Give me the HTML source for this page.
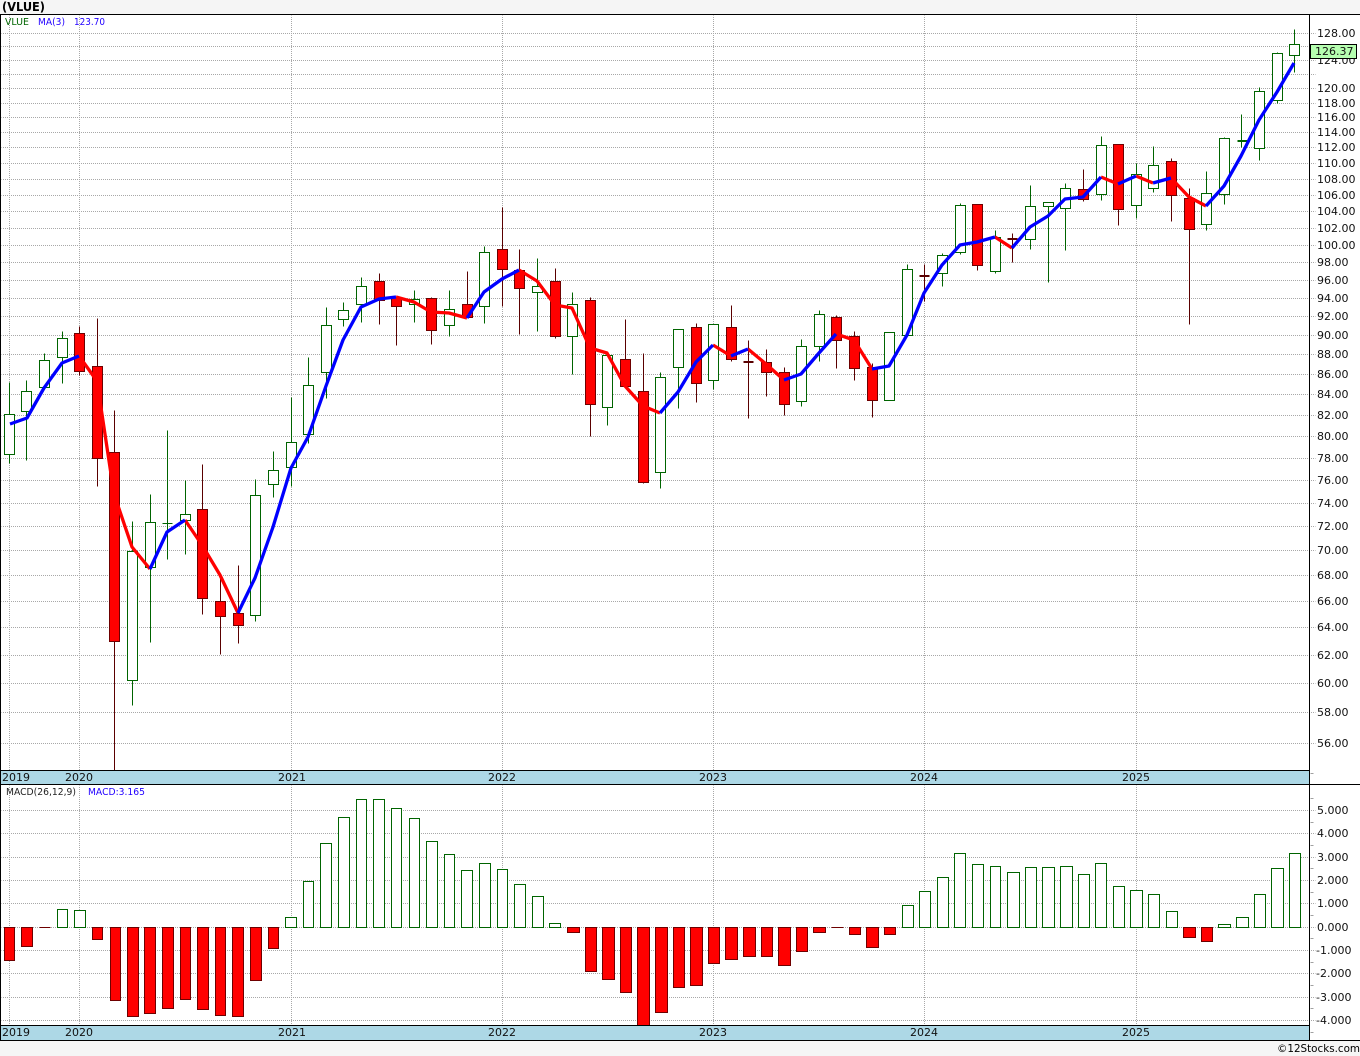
<!DOCTYPE html>
<html><head><meta charset="utf-8"><title>VLUE</title>
<style>
html,body{margin:0;padding:0;background:#f5f5f5;width:1360px;height:1056px;overflow:hidden}
svg{display:block}
text{font-family:"DejaVu Sans","Liberation Sans",sans-serif;font-size:11px;fill:#111}
.g{font-size:10px}
.c{shape-rendering:crispEdges}
.ma{fill:none;stroke-width:3.3;stroke-linejoin:round;stroke-linecap:butt}
.b{stroke:#0000ff}.r{stroke:#ff0000}
</style></head><body>
<svg width="1360" height="1056" viewBox="0 0 1360 1056" xmlns="http://www.w3.org/2000/svg">
<rect x="0" y="14" width="1360" height="1027" fill="#fff"/>
<g class="c" transform="translate(.5,.5)">
<path fill="none" stroke="#a8a8a8" stroke-dasharray="1 1" stroke-dashoffset="0.5" d="M1 33H1315M1 46H1315M1 60H1315M1 74H1315M1 88H1315M1 103H1315M1 117H1315M1 132H1315M1 147H1315M1 163H1315M1 179H1315M1 195H1315M1 211H1315M1 228H1315M1 245H1315M1 262H1315M1 280H1315M1 298H1315M1 316H1315M1 335H1315M1 354H1315M1 374H1315M1 394H1315M1 415H1315M1 436H1315M1 458H1315M1 480H1315M1 503H1315M1 526H1315M1 550H1315M1 575H1315M1 601H1315M1 627H1315M1 655H1315M1 683H1315M1 712H1315M1 743H1315M1 810H1315M1 833H1315M1 857H1315M1 880H1315M1 903H1315M1 927H1315M1 950H1315M1 973H1315M1 997H1315M1 1020H1315M9 15V770M79 15V770M291 15V770M502 15V770M713 15V770M924 15V770M1136 15V770M9 785V1025M79 785V1025M291 785V1025M502 785V1025M713 785V1025M924 785V1025M1136 785V1025"/>
<path fill="none" stroke="#a0a0a0" d="M1310 798H1313M1310 822H1313M1310 845H1313M1310 868H1313M1310 892H1313M1310 915H1313M1310 938H1313M1310 962H1313M1310 985H1313M1310 1008H1313M1310 1032H1313M1310 773H1313"/>

<!-- wicks -->
<path fill="none" stroke="#006400" d="M9 382V463M26 380V460M44 353V387M62 331V383M132 521V705M150 494V642M167 430V559M185 480V554M255 479V621M273 451V497M291 397V486M308 357V443M326 307V398M343 302V326M361 277V322M414 290V322M449 290V336M484 246V323M537 258V331M572 292V374M607 355V425M660 372V488M678 329V408M713 324V389M801 339V406M819 310V361M889 332V400M907 264V335M942 253V286M960 203V254M995 230V273M1030 185V249M1048 202V282M1065 183V250M1101 136V200M1136 163V218M1153 146V192M1206 171V230M1224 137V204M1241 114V147M1259 87V160M1277 52V103M1294 29V72M162 523H172M1237 140H1247M1237 141H1247"/>
<path fill="none" stroke="#5a0000" d="M79 326V375M97 318V486M114 410V770M202 464V614M220 575V654M238 565V643M379 273V324M396 297V345M431 297V344M467 271V317M502 207V306M519 249V334M555 268V338M590 297V436M625 319V386M643 353V483M696 323V402M731 305V361M748 340V418M766 349V396M784 367V415M836 315V368M854 331V380M872 363V417M924 264V301M977 205V270M1012 233V262M1083 169V201M1118 144V225M1171 158V221M1189 188V324M743 361H753M743 362H753M919 275H929M919 276H929M1007 238H1017M1007 239H1017"/>

<!-- bodies -->
<path fill="#fff" stroke="#006400" d="M4 414h10v40h-10zM21 391h10v20h-10zM39 360h10v27h-10zM57 338h10v19h-10zM127 551h10v129h-10zM145 522h10v45h-10zM180 514h10v6h-10zM250 495h10v120h-10zM268 470h10v14h-10zM286 442h10v25h-10zM303 385h10v49h-10zM321 325h10v47h-10zM338 310h10v9h-10zM356 286h10v18h-10zM409 299h10v5h-10zM444 309h10v16h-10zM479 252h10v54h-10zM532 286h10v6h-10zM567 304h10v32h-10zM602 355h10v52h-10zM655 377h10v95h-10zM673 329h10v38h-10zM708 324h10v56h-10zM796 346h10v55h-10zM814 314h10v32h-10zM884 332h10v68h-10zM902 269h10v66h-10zM937 255h10v18h-10zM955 205h10v47h-10zM990 237h10v34h-10zM1025 206h10v33h-10zM1043 202h10v4h-10zM1060 188h10v20h-10zM1096 145h10v49h-10zM1131 174h10v31h-10zM1148 165h10v23h-10zM1201 193h10v31h-10zM1219 138h10v56h-10zM1254 91h10v57h-10zM1272 53h10v47h-10zM1289 44h10v11h-10z"/>
<path fill="#ff0000" stroke="#6e0000" d="M74 333h10v38h-10zM92 366h10v92h-10zM109 452h10v189h-10zM197 509h10v89h-10zM215 601h10v15h-10zM233 613h10v12h-10zM374 281h10v19h-10zM391 297h10v9h-10zM426 298h10v32h-10zM462 304h10v13h-10zM497 249h10v20h-10zM514 270h10v18h-10zM550 281h10v55h-10zM585 300h10v104h-10zM620 359h10v27h-10zM638 391h10v91h-10zM691 327h10v56h-10zM726 327h10v32h-10zM761 362h10v10h-10zM779 372h10v32h-10zM831 317h10v23h-10zM849 336h10v32h-10zM867 367h10v33h-10zM972 204h10v61h-10zM1078 189h10v10h-10zM1113 144h10v65h-10zM1166 161h10v34h-10zM1184 198h10v31h-10z"/>

<!-- MACD histogram -->
<path fill="#fff" stroke="#006400" d="M57 909H67V927H57zM74 910H85V927H74zM285 917H296V927H285zM303 881H313V927H303zM320 843H331V927H320zM338 817H349V927H338zM356 799H366V927H356zM373 799H384V927H373zM391 808H401V927H391zM409 818H419V927H409zM426 841H437V927H426zM444 854H454V927H444zM461 870H472V927H461zM479 863H490V927H479zM497 869H507V927H497zM514 884H525V927H514zM532 896H543V927H532zM549 923H560V927H549zM902 905H913V927H902zM919 891H930V927H919zM937 877H948V927H937zM954 853H965V927H954zM972 864H983V927H972zM990 866H1000V927H990zM1007 872H1019V927H1007zM1025 867H1036V927H1025zM1042 867H1054V927H1042zM1060 866H1072V927H1060zM1078 874H1089V927H1078zM1095 863H1106V927H1095zM1113 886H1124V927H1113zM1130 890H1142V927H1130zM1148 894H1159V927H1148zM1166 911H1177V927H1166zM1218 924H1230V927H1218zM1236 917H1248V927H1236zM1254 894H1265V927H1254zM1271 868H1283V927H1271zM1289 853H1300V927H1289z"/>
<path fill="#ff0000" stroke="#6e0000" d="M4 927H14V960H4zM21 927H32V946H21zM92 927H102V939H92zM110 927H120V1000H110zM127 927H138V1016H127zM144 927H155V1013H144zM162 927H173V1008H162zM180 927H190V999H180zM197 927H208V1009H197zM215 927H225V1015H215zM232 927H243V1016H232zM250 927H261V980H250zM268 927H278V948H268zM567 927H579V932H567zM585 927H596V971H585zM602 927H614V979H602zM620 927H631V992H620zM637 927H649V1025H637zM655 927H667V1012H655zM673 927H684V987H673zM690 927H702V985H690zM708 927H719V963H708zM725 927H737V959H725zM743 927H755V956H743zM761 927H772V956H761zM778 927H790V965H778zM796 927H807V951H796zM813 927H825V932H813zM849 927H860V934H849zM866 927H878V947H866zM884 927H895V934H884zM1183 927H1195V937H1183zM1201 927H1212V941H1201z"/>
<path fill="none" stroke="#6e0000" d="M39 927H50M831 927H843"/>
</g>

<!-- MA -->
<polyline class="ma r" points="79,356 97,381 114,494 132,547 150,569"/>
<polyline class="ma r" points="185,520 202,545 220,575 238,613"/>
<polyline class="ma r" points="396,297 414,302 431,312 449,313 467,318"/>
<polyline class="ma r" points="519,270 537,281 555,305 572,308 590,348 607,353 625,386 643,406 660,413"/>
<polyline class="ma r" points="713,345 731,356"/>
<polyline class="ma r" points="748,349 766,364 784,380"/>
<polyline class="ma r" points="836,334 854,340 872,369"/>
<polyline class="ma r" points="995,237 1012,248"/>
<polyline class="ma r" points="1101,177 1118,184"/>
<polyline class="ma r" points="1136,176 1153,183"/>
<polyline class="ma r" points="1171,178 1189,197 1206,206"/>
<polyline class="ma b" points="10,424 27,418 44,388 62,363 79,356"/>
<polyline class="ma b" points="150,569 167,532 185,520"/>
<polyline class="ma b" points="238,613 255,578 273,527 291,468 308,437 326,386 343,340 361,307 379,299 396,297"/>
<polyline class="ma b" points="467,318 484,292 502,279 519,270"/>
<polyline class="ma b" points="660,413 678,392 696,362 713,345"/>
<polyline class="ma b" points="731,356 748,349"/>
<polyline class="ma b" points="784,380 801,374 819,353 836,334"/>
<polyline class="ma b" points="872,369 889,366 907,335 924,293 942,265 960,245 977,242 995,237"/>
<polyline class="ma b" points="1012,248 1030,227 1048,216 1065,199 1083,197 1101,177"/>
<polyline class="ma b" points="1118,184 1136,176"/>
<polyline class="ma b" points="1153,183 1171,178"/>
<polyline class="ma b" points="1206,206 1224,186 1241,156 1259,120 1277,92 1294,63"/>

<!-- bands and frame -->
<g class="c">
<rect x="1" y="771" width="1308" height="13" fill="#add8e6"/>
<rect x="1" y="1026" width="1308" height="14" fill="#add8e6"/>
<rect x="0" y="14" width="1360" height="1" fill="#000"/>
<rect x="0" y="770" width="1309" height="1" fill="#000"/>
<rect x="0" y="784" width="1360" height="1" fill="#000"/>
<rect x="0" y="1025" width="1309" height="1" fill="#000"/>
<rect x="0" y="1040" width="1360" height="1" fill="#000"/>
<rect x="0" y="14" width="1" height="1027" fill="#000"/>
<rect x="1309" y="14" width="1" height="1027" fill="#000"/>
</g>

<text x="2" y="11" style="font-size:12.5px;font-weight:bold;fill:#000" textLength="43" lengthAdjust="spacingAndGlyphs">(VLUE)</text>
<text class="g" x="5" y="25" style="fill:#006400" textLength="24" lengthAdjust="spacingAndGlyphs">VLUE</text>
<text class="g" x="38" y="25" style="fill:#2200ff" textLength="27" lengthAdjust="spacingAndGlyphs">MA(3)</text>
<text class="g" x="74" y="25" style="fill:#2200ff" textLength="31" lengthAdjust="spacingAndGlyphs">123.70</text>
<text class="g" x="6" y="795" style="fill:#222" textLength="70" lengthAdjust="spacingAndGlyphs">MACD(26,12,9)</text>
<text class="g" x="88" y="795" style="fill:#2200ff" textLength="57" lengthAdjust="spacingAndGlyphs">MACD:3.165</text>

<g>
<text x="2" y="781">2019</text><text x="65" y="781">2020</text><text x="278" y="781">2021</text><text x="488" y="781">2022</text><text x="699" y="781">2023</text><text x="910" y="781">2024</text><text x="1122" y="781">2025</text>
<text x="2" y="1036">2019</text><text x="65" y="1036">2020</text><text x="278" y="1036">2021</text><text x="488" y="1036">2022</text><text x="699" y="1036">2023</text><text x="910" y="1036">2024</text><text x="1122" y="1036">2025</text>
</g>

<g>
<text x="1317" y="37">128.00</text><text x="1317" y="64">124.00</text><text x="1317" y="92">120.00</text><text x="1317" y="107">118.00</text><text x="1317" y="121">116.00</text><text x="1317" y="136">114.00</text><text x="1317" y="151">112.00</text><text x="1317" y="167">110.00</text><text x="1317" y="183">108.00</text><text x="1317" y="199">106.00</text><text x="1317" y="215">104.00</text><text x="1317" y="232">102.00</text><text x="1317" y="249">100.00</text>
<text x="1317" y="266">98.00</text><text x="1317" y="284">96.00</text><text x="1317" y="302">94.00</text><text x="1317" y="320">92.00</text><text x="1317" y="339">90.00</text><text x="1317" y="358">88.00</text><text x="1317" y="378">86.00</text><text x="1317" y="398">84.00</text><text x="1317" y="419">82.00</text><text x="1317" y="440">80.00</text><text x="1317" y="462">78.00</text><text x="1317" y="484">76.00</text><text x="1317" y="507">74.00</text><text x="1317" y="530">72.00</text><text x="1317" y="554">70.00</text><text x="1317" y="579">68.00</text><text x="1317" y="605">66.00</text><text x="1317" y="631">64.00</text><text x="1317" y="659">62.00</text><text x="1317" y="687">60.00</text><text x="1317" y="716">58.00</text><text x="1317" y="747">56.00</text>
<text x="1317" y="814">5.000</text><text x="1317" y="837">4.000</text><text x="1317" y="861">3.000</text><text x="1317" y="884">2.000</text><text x="1317" y="907">1.000</text><text x="1317" y="931">0.000</text><text x="1316" y="954">-1.000</text><text x="1316" y="977">-2.000</text><text x="1316" y="1001">-3.000</text><text x="1316" y="1024">-4.000</text>
</g>

<rect class="c" x="1310.5" y="44.5" width="46" height="14" fill="#b6ffb0" stroke="#000"/>
<text x="1315" y="55">126.37</text>

<text x="1277" y="1052" textLength="83" lengthAdjust="spacingAndGlyphs" style="fill:#000">©12Stocks.com</text>
</svg>
</body></html>
